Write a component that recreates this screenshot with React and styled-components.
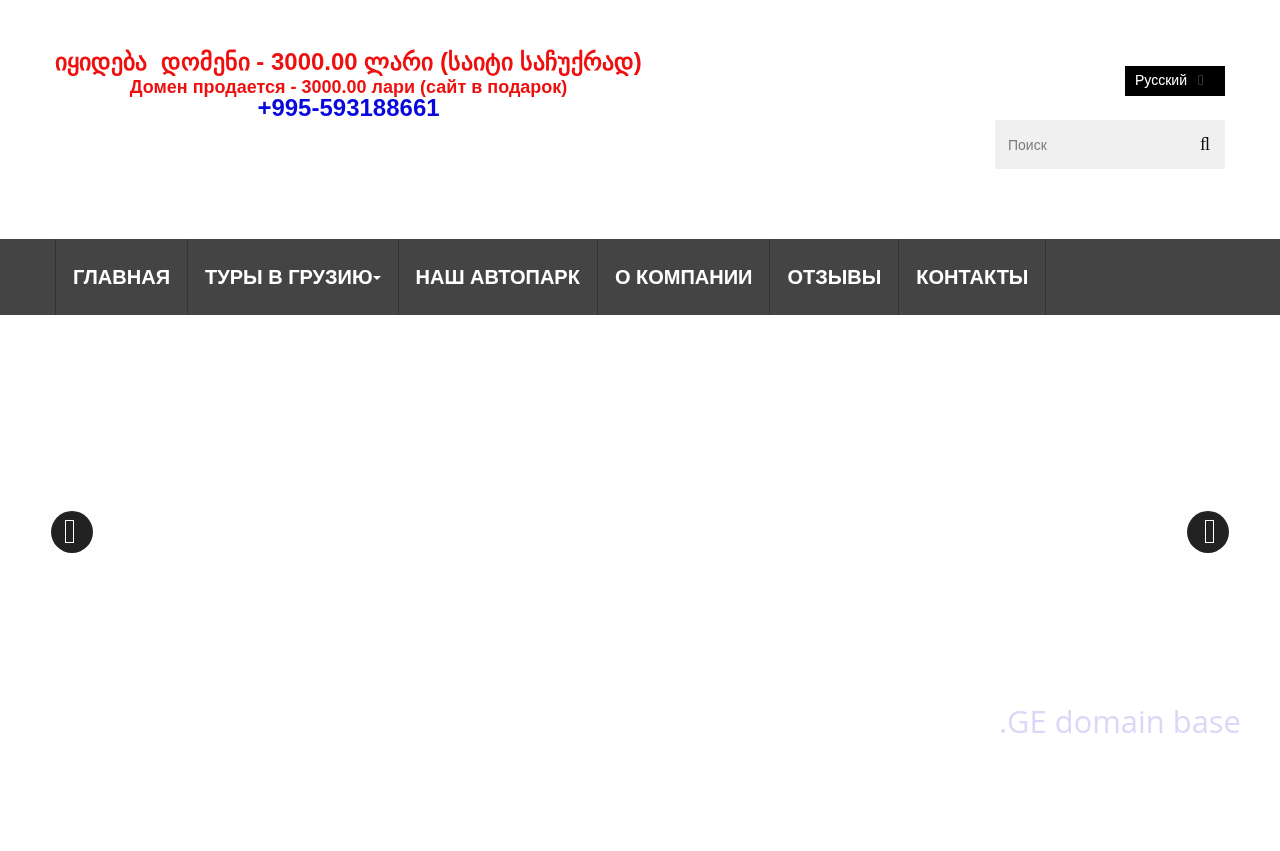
import React from "react";
import styled, { createGlobalStyle } from "styled-components";

const Global = createGlobalStyle`
  html, body { margin: 0; padding: 0; background: #fff; }
  body { font-family: "Liberation Sans", Arial, sans-serif; }
`;

const Page = styled.div`
  position: relative;
  width: 1280px;
  height: 851px;
  overflow: hidden;
  will-change: opacity;
`;
const Header = styled.header`
  height: 239px;
  box-sizing: border-box;
  padding: 0 55px;
  display: flex;
  justify-content: space-between;
`;
const Banner = styled.div`
  width: 587px;
  padding-top: 46px;
  display: flex;
  flex-direction: column;
  align-items: center;
  font-weight: 700;
  white-space: pre;
`;
const BannerLine = styled.div`
  color: ${(p) => p.$color};
  font-size: ${(p) => p.$size}px;
  line-height: ${(p) => p.$lh}px;
`;
const Tools = styled.div`
  width: 230px;
  padding-top: 66px;
  display: flex;
  flex-direction: column;
  align-items: flex-end;
  gap: 24px;
`;
const Lang = styled.div`
  width: 100px;
  height: 30px;
  box-sizing: border-box;
  padding: 0 0 2px 10px;
  background: #000;
  color: #fff;
  font-size: 14px;
  line-height: 28px;
  display: flex;
  align-items: center;
  gap: 11px;
`;
const Caret = styled.span`
  width: 5px;
  height: 10px;
  box-sizing: border-box;
  border: 1px solid #2e2e2e;
`;
const Search = styled.div`
  width: 230px;
  height: 49px;
  box-sizing: border-box;
  padding: 0 15px 0 13px;
  background: #f0f0f0;
  display: flex;
  align-items: center;
  justify-content: space-between;
`;
const Placeholder = styled.span`
  color: #7d7d7d;
  font-size: 14px;
`;
const SearchGlyph = styled.span`
  font-family: "Liberation Serif", serif;
  font-size: 18px;
  color: #111;
`;
const Nav = styled.nav`
  height: 76px;
  background: #444;
  padding-left: 55px;
  display: flex;
`;
const NavItem = styled.a`
  display: flex;
  align-items: center;
  padding: 0 17px;
  border-right: 1px solid #333;
  ${(p) => p.$first && "border-left: 1px solid #333;"}
  color: #fff;
  font-size: 20px;
  font-weight: 700;
`;
const DropCaret = styled.span`
  width: 0;
  height: 0;
  margin-top: 2px;
  border-top: 4px solid #fff;
  border-left: 4px solid transparent;
  border-right: 4px solid transparent;
`;
const Slider = styled.main`
  position: relative;
  height: 536px;
`;
const Arrow = styled.button`
  position: absolute;
  top: 196px;
  ${(p) => (p.$side === "left" ? "left: 51px; padding: 0 5px 2px 0;" : "right: 51px; padding: 0 0 2px 3px;")}
  width: 42px;
  height: 42px;
  border: 0;
  border-radius: 50%;
  background: #222;
  display: flex;
  align-items: center;
  justify-content: center;
`;
const ArrowGlyph = styled.span`
  width: 9px;
  height: 23px;
  box-sizing: border-box;
  border: 1px solid #fff;
`;
const Watermark = styled.div`
  position: absolute;
  left: 999px;
  top: 386px;
  color: #dcd6f7;
  font-family: "Open Sans", sans-serif;
  font-size: 30.9px;
  line-height: 40px;
  white-space: nowrap;
`;

const items = ["ГЛАВНАЯ", "ТУРЫ В ГРУЗИЮ", "НАШ АВТОПАРК", "О КОМПАНИИ", "ОТЗЫВЫ", "КОНТАКТЫ"];

export default function App() {
  return (
    <Page>
      <Global />
      <Header>
        <Banner>
          <BannerLine $color="#ee0f0f" $size={24} $lh={32}>იყიდება  დომენი - 3000.00 ლარი (საიტი საჩუქრად)</BannerLine>
          <BannerLine $color="#ee0f0f" $size={18} $lh={18}>Домен продается - 3000.00 лари (сайт в подарок)</BannerLine>
          <BannerLine $color="#0808dd" $size={24} $lh={24}>+995-593188661</BannerLine>
        </Banner>
        <Tools>
          <Lang>Русский<Caret /></Lang>
          <Search>
            <Placeholder>Поиск</Placeholder>
            <SearchGlyph>{"\ufb02"}</SearchGlyph>
          </Search>
        </Tools>
      </Header>
      <Nav>
        {items.map((t, i) => (
          <NavItem key={t} $first={i === 0}>
            {t}
            {i === 1 && <DropCaret />}
          </NavItem>
        ))}
      </Nav>
      <Slider>
        <Arrow $side="left"><ArrowGlyph /></Arrow>
        <Arrow $side="right"><ArrowGlyph /></Arrow>
        <Watermark>.GE domain base</Watermark>
      </Slider>
    </Page>
  );
}
